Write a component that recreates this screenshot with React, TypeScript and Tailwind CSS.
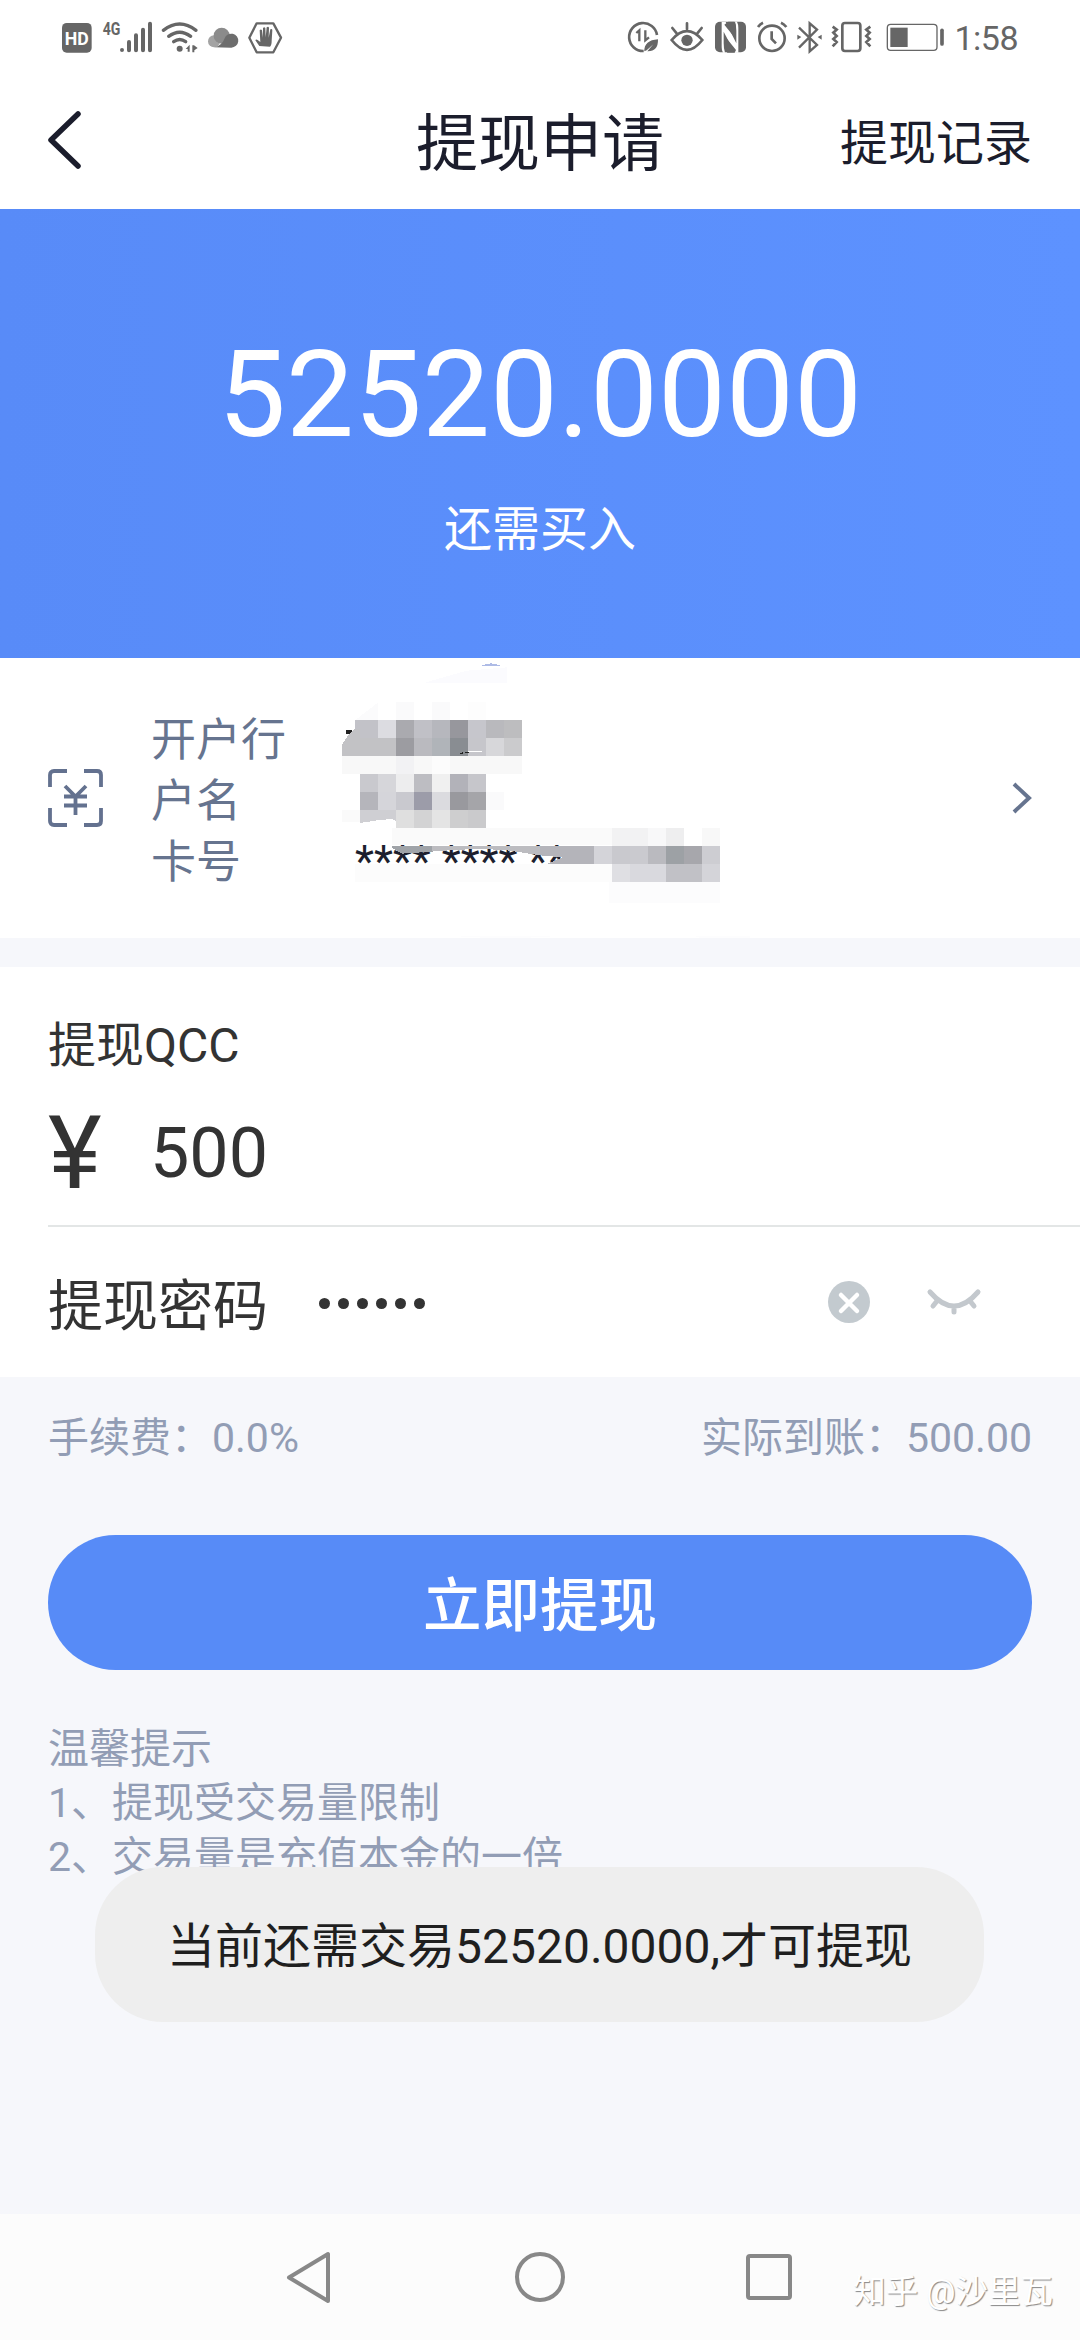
import type { ReactNode } from 'react';

// Status bar glyphs are drawn on a grid of three units per pixel
const Glyph = ({ x, w, children }: { x: number; w: number; children: ReactNode }) => (
  <svg width={w / 3} height={75} viewBox={`${x} 0 ${w} 225`} fill="none" className="shrink-0 overflow-visible">
    {children}
  </svg>
);

const StatusBar = () => (
  <div className="flex h-[75px] items-center justify-between pl-[60px] text-[#666666]">
    <div className="flex items-center">
      <Glyph x={60} w={120}>
        <rect x="66" y="69" width="89" height="89" rx="14" fill="currentColor" />
        <text x="110.500" y="134" textAnchor="middle" fontSize="56" fontWeight="700" fill="#fff" textLength="72" lengthAdjust="spacingAndGlyphs" className="font-['Roboto',sans-serif]">HD</text>
      </Glyph>
      <Glyph x={180} w={180}>
        <text x="188" y="106" fontSize="54" fontWeight="700" fill="currentColor" textLength="53" lengthAdjust="spacingAndGlyphs" className="font-['Roboto',sans-serif]">4G</text>
        <g stroke="currentColor" strokeWidth="12" strokeLinecap="round">
          <path d="M246 150v0M267 126v25M288 106v45M309 89v62M330 71v80" />
        </g>
      </Glyph>
      <Glyph x={360} w={135}>
        <g stroke="currentColor" strokeWidth="10" strokeLinecap="round">
          <path d="M370 91Q419 53 468 91M386 109Q419 84 452 109M401 125Q419 112 437 125" />
        </g>
        <circle cx="419" cy="146" r="9" fill="currentColor" />
        <path d="M437 147l12-13v21h-6v-8zM457 157v-21h5l11 8-10 7v6z" fill="currentColor" />
      </Glyph>
      <Glyph x={495} w={120}>
        <circle cx="522" cy="124" r="18" fill="#a3a3a3" />
        <circle cx="545" cy="107" r="24" fill="#8b8b8b" />
        <path d="M522 142q24-4 32-27a21 21 0 1 1 20 28z" fill="#6d6d6d" />
      </Glyph>
      <Glyph x={615} w={120}>
        <path d="M650 70h50l23 43-23 44h-50l-22-44z" stroke="currentColor" strokeWidth="7" strokeLinejoin="round" />
        <path d="M658 138l-12-17q2-5 7-1l8 6-2-35q4-5 7 0l3 22V84q4-5 7 0l1 28 3-30q5-4 7 1l-1 30 5-25q5-3 6 2l-2 33q0 13-5 17z" fill="currentColor" />
      </Glyph>
    </div>

    <div className="mr-[62px] flex items-center">
      <Glyph x={48} w={124}>
        <path d="M101 153a42 42 0 1 1 40-48" stroke="currentColor" strokeWidth="8" />
        <path d="M79 99l9-8v33M106 91v30l11-9" stroke="currentColor" strokeWidth="7" />
        <path d="M103 154q-1-33 41-36 1 37-32 36l18-21-20 18z" fill="currentColor" />
      </Glyph>
      <Glyph x={172} w={132}>
        <path d="M183 120q46-53 92 0-46 59-92 0zM229 70v18M185 84l13 16M273 84l-13 16" stroke="currentColor" strokeWidth="8" strokeLinecap="round" />
        <circle cx="229" cy="121" r="17" fill="currentColor" />
      </Glyph>
      <Glyph x={304} w={130}>
        <rect x="313" y="65" width="93" height="92" rx="15" fill="currentColor" />
        <path d="M337 158q-4-6-4-16V66h12l32 64V92q0-18-4-27h6q4 8 4 18v75h-11l-33-63v34q0 18 4 29z" fill="#fff" />
        <path d="M341 74l12-9h18q5 8 5 25v28zM376 150l-4 8h-22q-8-8-8-24v-26z" fill="currentColor" />
      </Glyph>
      <Glyph x={434} w={118}>
        <circle cx="485" cy="115" r="38" stroke="currentColor" strokeWidth="8" />
        <path d="M484 94v23l13 13M443 81q6-9 15-13M512 68q9 4 16 13" stroke="currentColor" strokeWidth="8" />
      </Glyph>
      <Glyph x={552} w={108}>
        <path d="M567 83l54 52-22 19V70l22 19-54 54" stroke="currentColor" strokeWidth="7" />
        <path d="M562 104l12 7-12 8zM635 104l-12 7 12 8z" fill="currentColor" />
      </Glyph>
      <Glyph x={660} w={160}>
        <rect x="697" y="69" width="54" height="84" rx="8" stroke="currentColor" strokeWidth="8" />
        <path d="M668 80l12 9-10 9 10 10-10 9 10 9-12 13M781 80l-12 9 10 9-10 10 10 9-10 9 12 13" stroke="currentColor" strokeWidth="8" />
      </Glyph>
      <Glyph x={820} w={200}>
        <rect x="830" y="73" width="149" height="78" rx="10" stroke="currentColor" strokeWidth="4" />
        <rect x="839" y="83" width="52" height="58" fill="currentColor" />
        <path d="M994 91v41" stroke="currentColor" strokeWidth="11" strokeLinecap="round" />
      </Glyph>
      <span className="ml-1 text-[34px] leading-[76px] tracking-[-0.5px]">1:58</span>
    </div>
  </div>
);

const labels = ['开户行', '户名', '卡号'];

// Pixelated patches over the private account details: [x, y, width, height, colour]
const patches: [number, number, number, number, string][] = [
  [76, 156, 68, 54, '#fbfbfc'], [198, 156, 54, 54, '#fafafb'], [306, 156, 54, 54, '#fafafb'], [414, 156, 54, 54, '#fdfdfd'],
  [76, 210, 68, 54, '#c2c2c8'], [144, 210, 54, 54, '#dcdce1'], [198, 210, 54, 54, '#aaaaaf'], [252, 210, 54, 54, '#c0c0c6'],
  [306, 210, 54, 54, '#b6b7bd'], [360, 210, 54, 54, '#97979d'], [414, 210, 54, 54, '#c6c6cc'], [468, 210, 54, 54, '#b9b9bd'], [522, 210, 54, 54, '#bdbdbf'],
  [90, 264, 108, 54, '#c2c2c5'], [198, 264, 54, 54, '#9c9ca1'], [252, 264, 54, 54, '#bababf'], [306, 264, 54, 54, '#b0b4b9'],
  [360, 264, 54, 54, '#898d92'], [414, 264, 54, 54, '#c6c6cb'], [468, 264, 54, 54, '#d7d7da'], [522, 264, 54, 54, '#cbcbcd'],
  [36, 318, 540, 54, '#f8f8f8'], [198, 318, 54, 54, '#f2f2f4'], [306, 318, 54, 54, '#fcfcfc'],
  [90, 372, 54, 54, '#c9c9ce'], [144, 372, 54, 54, '#d6d6da'], [198, 372, 54, 54, '#ededee'], [252, 372, 54, 54, '#bdbdc2'],
  [306, 372, 54, 54, '#f0f0f0'], [360, 372, 54, 54, '#b2b2b9'], [414, 372, 54, 54, '#c6c6cb'],
  [90, 426, 54, 54, '#b5b5bb'], [144, 426, 54, 54, '#d5d5da'], [198, 426, 54, 54, '#c9c9cf'], [252, 426, 54, 54, '#9c9ca9'],
  [306, 426, 54, 54, '#dbdbdf'], [360, 426, 54, 54, '#99999e'], [414, 426, 54, 54, '#a5a5a9'], [468, 426, 54, 54, '#fafafb'],
  [36, 480, 54, 36, '#fafafa'], [198, 480, 54, 54, '#dfdfdf'], [252, 480, 54, 54, '#d3d3d4'], [306, 480, 54, 54, '#e4e4e4'],
  [360, 480, 54, 54, '#cececf'], [414, 480, 54, 54, '#cacacc'],
  [186, 534, 660, 51, '#fafafa'], [846, 534, 108, 54, '#f2f2f3'], [954, 534, 54, 54, '#f8f8f9'], [1008, 534, 54, 54, '#eeeeef'], [1116, 534, 54, 54, '#f8f8f8'],
  [792, 588, 54, 54, '#d4d4d9'], [846, 588, 54, 54, '#c9c9ce'], [900, 588, 54, 54, '#cacacf'], [954, 588, 54, 54, '#bababf'],
  [1008, 588, 54, 54, '#9da1a5'], [1062, 588, 54, 54, '#a7a7ac'], [1116, 588, 54, 54, '#cdcdd2'],
  [846, 642, 54, 54, '#dfdfe3'], [900, 642, 108, 54, '#d9d9de'], [1008, 642, 108, 54, '#c1c1c6'], [1116, 642, 54, 54, '#d4d4d9'],
  [76, 642, 770, 54, '#fcfcfc'], [836, 696, 334, 64, '#fcfcfd'],
];

const Mosaic = () => (
  <svg viewBox="0 0 1260 900" className="absolute -top-2 left-[330px] h-[300px] w-[420px]" shapeRendering="crispEdges">
    <path d="M285 98L410 62 530 52V98z" fill="#fbfbfe" />
    <path d="M456 47q28-14 54 0z" fill="#aebbe6" />
    {patches.map(([x, y, w, h, fill]) => (
      <rect key={`${x}-${y}`} x={x} y={y} width={w} height={h} fill={fill} />
    ))}
    <path d="M76 210l70-54H76z" fill="#fff" />
    <path d="M48 241h18l-4 10H48z" fill="#222" />
    <path d="M36 318v-34l20-30 20-18h14v82z" fill="#c2c2c5" />
    <path d="M388 310l10-3v5zM406 306l12-2v6h-12z" fill="#222" />
    <path d="M414 304l46-1-12 4h-34z" fill="#fff" />
    <path d="M90 480h108v33l-10-6-40 3-58 9z" fill="#cfcfd3" />
    <path d="M186 588h144v15l-84 6-30 2-30-18z" fill="#9fa3a8" />
    <path d="M306 588h324v28l-90-14-90-6-144 8z" fill="#bcbcc0" />
    <path d="M630 588h162v54H650l48-20-68-6z" fill="#b4b4ba" />
    <path d="M350 857h345q-80 7-170 7t-175-7zM1090 857h170v7h-150z" fill="#fdfdfe" />
  </svg>
);

const BankCard = () => (
  <section className="relative flex h-[280px] items-center bg-white px-12">
    <svg width="55" height="58" viewBox="0 0 55 58" fill="none" stroke="#63718f" strokeWidth="3.800">
      <path d="M2 18V6q0-4 4-4h13M36 2h13q4 0 4 4v12M53 39v13q0 4-4 4H36M19 56H6q-4 0-4-4V39" />
      <path d="M17 17l10.500 10.500L38 17M27.500 27v19M16 27.500h23M16 36.500h23" />
    </svg>
    <div className="mt-[6px] ml-12 w-[204px] text-[45px] leading-[61px] text-[#66748f]">
      {labels.map((label) => (
        <p key={label}>{label}</p>
      ))}
    </div>
    <p className="mt-[128px] text-[44px] leading-[61px] text-[#1d1f2e]">**** **** **</p>
    <svg width="20" height="32" viewBox="0 0 20 32" fill="none" stroke="#66748f" strokeWidth="4" className="ml-auto">
      <path d="M2 2l15 14L2 30" />
    </svg>
    <Mosaic />
  </section>
);

const WithdrawForm = () => (
  <section className="mt-[29px] h-[410px] bg-white pl-12 text-[#333333]">
    <h2 className="pt-[51px] text-[48px] leading-[56px]">提现QCC</h2>
    <div className="flex h-[151px] items-center pt-[6px]">
      <span className="w-[102px] text-[102px] leading-[100px]">¥</span>
      <span className="text-[70px] leading-[80px]">500</span>
    </div>
    <div className="flex h-[152px] items-center border-t-2 border-[#e3e6e6]">
      <span className="w-[271px] pt-[7px] text-[55px] leading-[60px]">提现密码</span>
      <div className="mt-[2px] flex gap-2">
        {[0, 1, 2, 3, 4, 5].map((dot) => (
          <span key={dot} className="size-[11px] rounded-full bg-[#333333]" />
        ))}
      </div>
      <svg width="42" height="42" viewBox="0 0 42 42" className="ml-auto">
        <circle cx="21" cy="21" r="21" fill="#c3cacf" />
        <path d="M13 14l16 16M29 14L13 30" stroke="#fff" strokeWidth="4.500" strokeLinecap="round" />
      </svg>
      <svg width="56" height="28" viewBox="0 0 56 28" fill="none" stroke="#c3c8cd" strokeWidth="5" strokeLinecap="round" className="mr-[98px] ml-[56px]">
        <path d="M4 4q24 28 48 0M11 13l-4 5M28 18v6M44 13l4 5" />
      </svg>
    </div>
  </section>
);

const App = () => {
  return (
    <div className="flex h-[2340px] w-[1080px] flex-col overflow-hidden bg-[#f6f7fb] font-['Roboto','Noto_Sans_CJK_SC',sans-serif]">
      <header className="h-[209px] bg-white">
        <StatusBar />
        <div className="grid h-[134px] grid-cols-3 items-center px-12 text-[#1b1d2c]">
          <svg width="34" height="60" viewBox="0 0 34 60" fill="none" stroke="currentColor" strokeWidth="5.500" strokeLinecap="round" strokeLinejoin="round" className="-mt-1">
            <path d="M30 4L3 30l27 26" />
          </svg>
          <h1 className="pt-[6px] text-center text-[62px] leading-[70px]">提现申请</h1>
          <span className="pt-[3px] text-right text-[48px] leading-[60px]">提现记录</span>
        </div>
      </header>

      <section className="flex h-[449px] flex-col items-center bg-linear-to-r from-[#588bf8] to-[#5d92ff] text-white">
        <p className="mt-[116px] text-[121px] leading-[140px]">52520.0000</p>
        <p className="mt-[35px] text-[48px] leading-[60px]">还需买入</p>
      </section>

      <BankCard />
      <WithdrawForm />

      <div className="flex justify-between px-12 pt-[37px] text-[41px] leading-[48px] text-[#929db5]">
        <span>手续费：0.0%</span>
        <span>实际到账：500.00</span>
      </div>

      <button className="mx-12 mt-[73px] h-[135px] rounded-full bg-[#578bf7] pt-[7px] text-[58.500px] leading-none font-medium text-white">
        立即提现
      </button>

      <div className="relative mt-[52px] px-12 text-[41px] leading-[54px] text-[#929db5]">
        <p>温馨提示</p>
        <p>1、提现受交易量限制</p>
        <p>2、交易量是充值本金的一倍</p>
        {/* Toast */}
        <div className="absolute top-[145px] left-[95px] flex h-[155px] w-[889px] items-center justify-center rounded-[68px] bg-[#eeeeee] pt-1 text-[48px] text-[#1f1f1f]">
          当前还需交易52520.0000,才可提现
        </div>
      </div>

      <nav className="relative mt-auto flex h-[126px] items-center bg-[#fcfcfc] pl-[280px] text-[#888888]">
        <svg width="60" height="60" viewBox="0 0 60 60" fill="none" stroke="currentColor" strokeWidth="4" strokeLinejoin="round">
          <path d="M48 7v47L9 30.500z" />
        </svg>
        <span className="ml-[175px] size-[50px] rounded-full border-4 border-current" />
        <span className="ml-[181px] size-[46px] rounded-[4px] border-4 border-current" />
        <span className="absolute top-[58px] right-[27px] text-[32.500px] leading-[40px] text-white [text-shadow:1px_1px_1px_#888888]">
          知乎 @沙里瓦
        </span>
      </nav>
    </div>
  );
};

export default App;
